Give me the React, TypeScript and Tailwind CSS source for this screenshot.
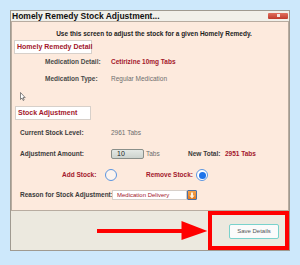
import React from "react"

const F = "font-['Liberation_Sans',Arial,sans-serif]"

export default function App() {
  return (
    <div className={`w-[300px] h-[265px] bg-[#cde8fb] pt-[10px] pl-[10px] whitespace-nowrap ${F}`}>
      <div className="relative w-[280px] h-[241px] border border-[#9f9a90] bg-[#ece9df] flex flex-col">
        {/* title bar */}
        <div className="h-[10px] flex items-center justify-between pl-[1px] pr-[1px] bg-[#f1f0ea]">
          <span className="text-[8.5px] leading-none font-bold text-[#111]">Homely Remedy Stock Adjustment...</span>
          <div className="w-[20px] h-[6px] -mt-[1px] rounded-[1px] bg-gradient-to-b from-[#e0705f] to-[#c0382a] flex items-center justify-center">
            <span className="block w-[3px] h-[3px] bg-[#f4e4e0]" />
          </div>
        </div>

        {/* content */}
        <div className="h-[190px] bg-[#fdeadd] border border-[#b8aca0] flex flex-col relative">
          <div className="h-[9px] mt-[7px] flex items-center justify-center text-[6.5px] font-bold text-[#1e1e1e] pl-[8px]">
            Use this screen to adjust the stock for a given Homely Remedy.
          </div>

          <div className="ml-[2px] mt-[2px] w-[78px] h-[14px] bg-white border border-[#d7d0ca] flex items-center pl-[2px] text-[7px] font-bold text-[#a3172c]">
            Homely Remedy Detail
          </div>

          <div className="flex items-center h-[10px] mt-[3px] pl-[33px]">
            <div className="w-[66px] text-[6.5px] font-bold text-[#4a4a4a]">Medication Detail:</div>
            <div className="text-[6.5px] font-bold text-[#a3172c]">Cetirizine 10mg Tabs</div>
          </div>
          <div className="flex items-center h-[10px] mt-[7px] pl-[33px]">
            <div className="w-[66px] text-[6.5px] font-bold text-[#4a4a4a]">Medication Type:</div>
            <div className="text-[6.5px] text-[#6e6e6e]">Regular Medication</div>
          </div>

          {/* mouse cursor */}
          <svg className="absolute left-[8px] top-[70px]" width="6" height="9" viewBox="0 0 6 9">
            <path d="M0.5 0.5 L0.5 7.5 L2 6 L3.2 8.5 L4.2 8 L3 5.6 L5.2 5.6 Z" fill="#fff" stroke="#555" strokeWidth="0.7" />
          </svg>

          <div className="ml-[3px] mt-[22px] w-[76px] h-[14px] bg-white border border-[#d7d0ca] flex items-center pl-[2px] text-[7px] font-bold text-[#a3172c]">
            Stock Adjustment
          </div>

          <div className="flex items-center h-[10px] mt-[8px] pl-[8px]">
            <div className="w-[91px] text-[6.5px] font-bold text-[#3b3b3b]">Current Stock Level:</div>
            <div className="text-[6.5px] text-[#6e6e6e]">2961 Tabs</div>
          </div>

          <div className="flex items-center h-[10px] mt-[11px] pl-[8px]">
            <div className="w-[91px] text-[6.5px] font-bold text-[#3b3b3b]">Adjustment Amount:</div>
            <div className="w-[33px] h-[10px] rounded-[2px] border border-[#8a8f8a] bg-gradient-to-b from-[#e4e8e4] to-[#cdd3ce] flex items-center pl-[5px] text-[7px] text-[#222]">
              10
            </div>
            <div className="ml-[2px] w-[42px] text-[6.5px] text-[#6e6e6e]">Tabs</div>
            <div className="w-[37px] text-[6.5px] font-bold text-[#3b3b3b]">New Total:</div>
            <div className="text-[6.5px] font-bold text-[#a3172c]">2951 Tabs</div>
          </div>

          <div className="flex items-center h-[12px] mt-[10px] pl-[50px]">
            <div className="w-[43px] text-[6.5px] font-bold text-[#a3172c]">Add Stock:</div>
            <div className="w-[12px] h-[12px] rounded-full border border-[#5b95e0] bg-[#fdf4ee]" />
            <div className="ml-[29px] w-[50px] text-[6.5px] font-bold text-[#a3172c]">Remove Stock:</div>
            <div className="w-[12px] h-[12px] rounded-full border border-[#5b95e0] bg-white flex items-center justify-center">
              <div className="w-[7px] h-[7px] rounded-full bg-[#1e73ea]" />
            </div>
          </div>

          <div className="flex items-center h-[10px] mt-[9px] pl-[8px]">
            <div className="w-[92px] text-[6.5px] font-bold text-[#3b3b3b]">Reason for Stock Adjustment:</div>
            <div className="w-[75px] h-[10px] bg-white border border-[#d7d0ca] flex items-center pl-[4px] text-[6px] text-[#a3172c]">
              Medication Delivery
            </div>
            <div className="w-[10px] h-[10px] rounded-[1px] border border-[#4d6fa3] bg-gradient-to-b from-[#f7a34a] to-[#e47a1c] flex items-center justify-center">
              <svg width="6" height="7" viewBox="0 0 6 7">
                <path d="M2 0.5 H4 V3.5 H5.5 L3 6.5 L0.5 3.5 H2 Z" fill="#fff3e0" />
              </svg>
            </div>
          </div>
        </div>

        {/* footer */}
        <div className="flex-1 flex items-center">
          <svg className="ml-[86px]" width="112" height="20" viewBox="0 0 112 20">
            <rect x="0" y="8" width="90" height="4" fill="#ff0000" />
            <path d="M85 0 L111 10 L85 19 Z" fill="#ff0000" />
          </svg>
          <div className="w-[81px] h-[39px] border-[4px] border-[#ff0000] flex items-center justify-end pr-[6px] pt-[2px]">
            <div className="w-[50px] h-[15px] rounded-[2px] border-[1.5px] border-[#79d2cc] bg-[#fbfbfb] flex items-center justify-center text-[6px] text-[#555]">
              Save Details
            </div>
          </div>
        </div>
      </div>
    </div>
  )
}
